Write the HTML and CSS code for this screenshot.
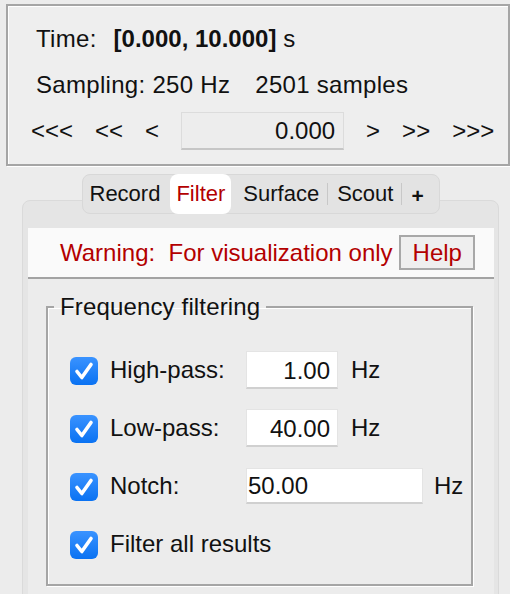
FILE: index.html
```html
<!DOCTYPE html>
<html lang="en">
<head>
    <meta charset="UTF-8">
    <meta name="viewport" content="width=device-width, initial-scale=1.0">
    <title>Filter</title>
    <link rel="stylesheet" href="styles.css">
</head>
<body>
    <div class="info">
        <div class="infoRow"><span>Time:</span><b class="range">[0.000, 10.000]</b>&nbsp;s</div>
        <div class="infoRow"><span>Sampling: 250 Hz</span><span class="samples">2501 samples</span></div>
        <div class="navRow">
            <span class="nav">&lt;&lt;&lt;</span>
            <span class="nav">&lt;&lt;</span>
            <span class="nav">&lt;</span>
            <div class="timeField">0.000</div>
            <span class="nav">&gt;</span>
            <span class="nav">&gt;&gt;</span>
            <span class="nav">&gt;&gt;&gt;</span>
        </div>
    </div>

    <div class="tabsWrap">
        <div class="tabs">
            <span class="tab tabFirst">Record</span>
            <span class="tab tabActive">Filter</span>
            <span class="tab tabAfter">Surface</span>
            <span class="sep"></span>
            <span class="tab">Scout</span>
            <span class="sep"></span>
            <span class="tab tabPlus">+</span>
        </div>
    </div>

    <div class="panel">
        <div class="panelBody">
            <div class="warning">
                <span>Warning:&nbsp; For visualization only</span>
                <span class="helpBtn">Help</span>
            </div>
            <fieldset class="group">
                <legend>Frequency filtering</legend>
                <div class="row">
                    <span class="check"><svg width="28" height="28" viewBox="0 0 28 28"><path d="M7 14.5 L11.8 20.5 L21 7.5" fill="none" stroke="#fff" stroke-width="3.6" stroke-linecap="round" stroke-linejoin="round"/></svg></span>
                    <span class="label">High-pass:</span>
                    <span class="field">1.00</span>
                    <span class="unit">Hz</span>
                </div>
                <div class="row">
                    <span class="check"><svg width="28" height="28" viewBox="0 0 28 28"><path d="M7 14.5 L11.8 20.5 L21 7.5" fill="none" stroke="#fff" stroke-width="3.6" stroke-linecap="round" stroke-linejoin="round"/></svg></span>
                    <span class="label">Low-pass:</span>
                    <span class="field">40.00</span>
                    <span class="unit">Hz</span>
                </div>
                <div class="row">
                    <span class="check"><svg width="28" height="28" viewBox="0 0 28 28"><path d="M7 14.5 L11.8 20.5 L21 7.5" fill="none" stroke="#fff" stroke-width="3.6" stroke-linecap="round" stroke-linejoin="round"/></svg></span>
                    <span class="label">Notch:</span>
                    <span class="field fieldWide">50.00</span>
                    <span class="unit unitWide">Hz</span>
                </div>
                <div class="row">
                    <span class="check"><svg width="28" height="28" viewBox="0 0 28 28"><path d="M7 14.5 L11.8 20.5 L21 7.5" fill="none" stroke="#fff" stroke-width="3.6" stroke-linecap="round" stroke-linejoin="round"/></svg></span>
                    <span class="labelFree">Filter all results</span>
                </div>
            </fieldset>
        </div>
    </div>
</body>
</html>
```

FILE: styles.css
```css
body{
    margin: 0;
    background: #ececec;
    font-family: "Liberation Sans", Arial, sans-serif;
    font-size: 24px;
    color: #111;
}
.info{
    box-sizing: border-box;
    width: 504px;
    margin: 4px 0 0 6px;
    padding: 10px 0 10px 28px;
    background: #eeeeee;
    border: 2px solid #a5a5a5;
    box-shadow: inset 1px 1px 0 #fff, 1px 1px 0 #fff;
}
.infoRow{
    height: 46px;
    line-height: 46px;
    white-space: nowrap;
    letter-spacing: 0.3px;
}
.range{
    margin-left: 17px;
    letter-spacing: 0;
}
.samples{
    margin-left: 25px;
}
.navRow{
    display: flex;
    align-items: center;
    height: 46px;
    margin-left: -5px;
    gap: 22px;
}
.timeField{
    box-sizing: border-box;
    width: 163px;
    height: 38px;
    line-height: 36px;
    padding-right: 8px;
    text-align: right;
    background: #ededed;
    border: 1px solid #dcdcdc;
    border-bottom: 2px solid #c6c6c6;
}
.tabsWrap{
    position: relative;
    z-index: 1;
    display: flex;
    justify-content: center;
    width: 477px;
    margin: 8px 0 0 22px;
}
.tabs{
    display: flex;
    align-items: center;
    box-sizing: border-box;
    width: 358px;
    height: 40px;
    padding-left: 1px;
    background: #e3e3e3;
    border: 1px solid #d8d8d8;
    border-radius: 8px;
    font-size: 22px;
}
.tab{
    height: 38px;
    line-height: 38px;
    padding: 0 6px;
}
.tabFirst{
    margin-right: 4px;
}
.tabActive{
    height: 40px;
    line-height: 40px;
    background: #fff;
    color: #b30000;
    border-radius: 8px;
}
.tabAfter{
    margin-left: 6px;
}
.sep{
    width: 1px;
    height: 22px;
    margin: 0 3px 0 2px;
    background: #c8c8c8;
}
.tabPlus{
    font-weight: bold;
    font-size: 21px;
    padding-top: 4px;
}
.panel{
    box-sizing: border-box;
    width: 477px;
    margin: -14px 0 0 22px;
    padding: 27px 4px 0 5px;
    background: #e5e5e5;
    border: 1px solid #dadada;
    border-radius: 8px 8px 0 0;
}
.panelBody{
    background: #ececec;
    padding-bottom: 20px;
}
.warning{
    display: flex;
    align-items: center;
    height: 49px;
    padding-left: 32px;
    background: #fafafa;
    border-bottom: 2px solid #a3a3a3;
    color: #b30000;
    white-space: nowrap;
}
.helpBtn{
    box-sizing: border-box;
    height: 35px;
    line-height: 31px;
    margin-left: 6px;
    padding: 0 11px 0 12px;
    background: #efefef;
    border: 2px solid #a8a8a8;
}
.group{
    margin: 14px 21px 0 18px;
    padding: 20px 0 11px 22px;
    border: 2px solid #a5a5a5;
    box-shadow: inset 1px 1px 0 #fff, 1px 1px 0 #fff;
    min-width: 0;
}
.group legend{
    margin-left: -16px;
    padding: 0 6px;
    letter-spacing: 0.15px;
}
.row{
    display: flex;
    align-items: center;
    height: 58px;
}
.check{
    display: block;
    width: 28px;
    height: 28px;
    margin-top: 2px;
    border-radius: 6px;
    background: linear-gradient(#3a93ff, #0a72f2);
}
.check svg{
    display: block;
}
.label{
    width: 136px;
    margin-left: 12px;
}
.labelFree{
    margin-left: 12px;
}
.field{
    box-sizing: border-box;
    width: 92px;
    height: 38px;
    line-height: 37px;
    padding-right: 7px;
    text-align: right;
    background: #fff;
    border: 1px solid #e4e4e4;
    border-bottom: 2px solid #d0d0d0;
}
.fieldWide{
    width: 177px;
    height: 36px;
    line-height: 34px;
    padding-left: 1px;
    text-align: left;
}
.unit{
    margin-left: 13px;
}
.unitWide{
    margin-left: 11px;
}
```
